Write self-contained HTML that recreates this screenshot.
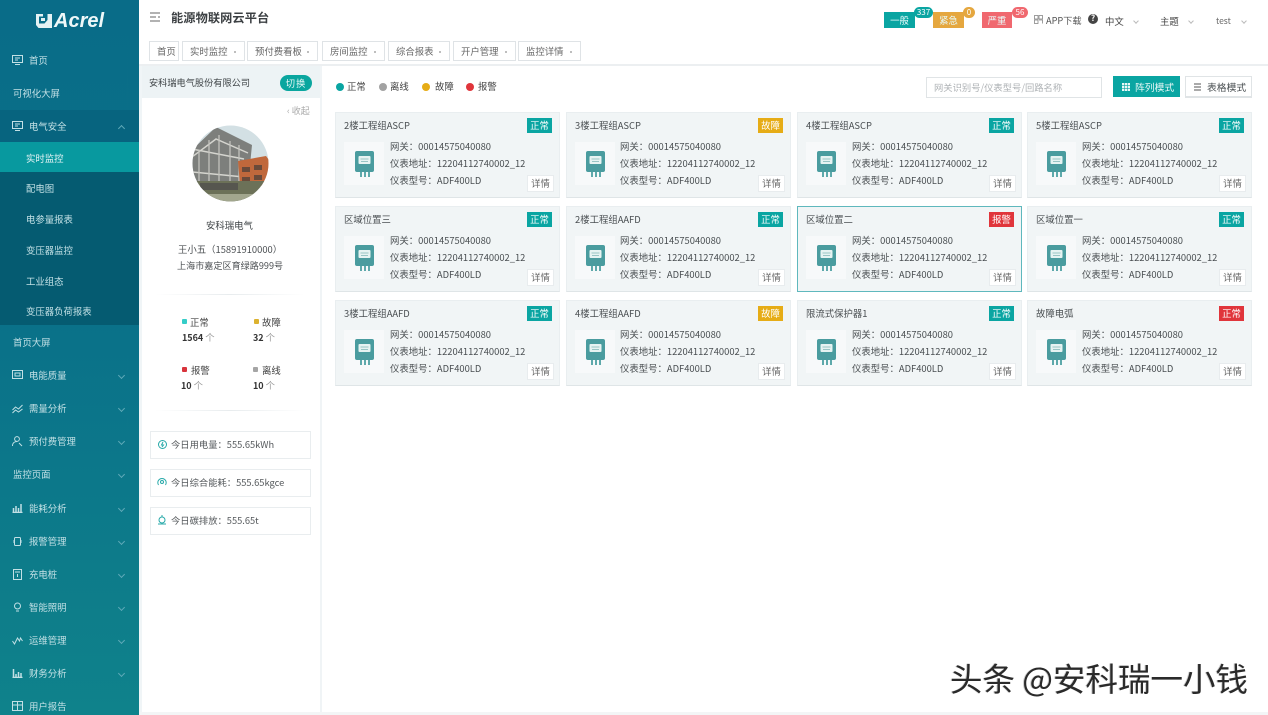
<!DOCTYPE html>
<html lang="zh-CN"><head><meta charset="utf-8"><title>能源物联网云平台</title>
<style>
html,body{margin:0;padding:0}
body{width:1268px;height:715px;overflow:hidden;background:#fff;font-family:"Noto Sans CJK SC","Liberation Sans",sans-serif;color:#444;position:relative}
#r{position:absolute;left:0;top:0;width:1268px;height:715px;overflow:hidden;filter:blur(.35px)}
.a{position:absolute}
.t{position:absolute;white-space:nowrap;line-height:16px;height:16px;font-size:9.4px}
#side{left:0;top:0;width:139px;height:715px;background:linear-gradient(180deg,#096c88 0,#0a7189 45%,#0f828b 100%);color:#cfe6ea}
#side .t{color:#c2e0e5;font-size:9.4px}
#side svg{position:absolute;fill:none;stroke:#c2e0e5;stroke-width:1}
.tab{position:absolute;top:41px;height:18px;border:1px solid #dfe3e6;background:#fff;font-size:9.4px;line-height:18px;color:#666;white-space:nowrap;box-sizing:content-box;padding-left:7px}
.tab i{position:absolute;right:8px;top:9px;width:2px;height:2px;background:#aaa;border-radius:50%}
.card{position:absolute;width:223px;height:84px;background:#f1f5f6;border:1px solid #e9eef0;border-bottom:1px solid #dfe5e7;box-sizing:content-box}
.card.sel{border:1px solid #5fb8bd}
.card .t{color:#4a4f52}
.tile{position:absolute;left:8px;top:29px;width:40px;height:43px;background:#f7f9fa}
.tile svg{position:absolute;left:10px;top:9px}
.bd{position:absolute;left:191px;top:5px;width:25px;height:15px;color:#fff;font-size:9.4px;line-height:15px;text-align:center}
.det{position:absolute;left:191px;top:62px;width:25px;height:15px;background:#fff;border:1px solid #e8ecee;color:#666;font-size:9.4px;line-height:15px;text-align:center}
.g{background:#0aa5a2}.y{background:#e6ac16}.rd{background:#e0353b}
.sum{position:absolute;left:150px;width:159px;height:26px;border:1px solid #e9edef;background:#fff}
.arr{position:absolute;width:4px;height:4px;border-right:1px solid #5fa9b8;border-bottom:1px solid #5fa9b8;transform:rotate(45deg)}
.top-b{position:absolute;top:12px;height:16px;width:31px;color:#e8fbfa;font-size:9.4px;line-height:16px;text-align:center}
.num{position:absolute;color:#fff;font-size:8px;line-height:11px;height:11px;border-radius:6px;text-align:center}
.chev{position:absolute;width:3px;height:3px;border-right:1px solid #bbb;border-bottom:1px solid #bbb;transform:rotate(45deg)}
.dot{position:absolute;width:8px;height:8px;border-radius:50%;top:83px}
.sd{position:absolute;width:5px;height:5px;border-radius:1px}
.n{font-weight:700;color:#333;font-size:9px}
.n span{font-weight:400;color:#999;font-size:9.4px;margin-left:2px}
</style></head><body><div id="r">

<!-- sidebar -->
<div id="side" class="a">
  <svg style="left:36px;top:14px;stroke:none" width="16" height="14" viewBox="0 0 16 14"><path style="fill:#e4f2f4" d="M0 0h7v2.500H3v7h5.500L11.500 6V0H16v14H2.500L0 11zM5 4h4v3H5z"/></svg>
  <div class="t" style="left:54px;top:10px;height:23px;line-height:23px;font:italic bold 20px 'Liberation Sans',sans-serif;color:#eef8f9">Acrel</div>
  <div class="a" style="left:0;top:142px;width:139px;height:30px;background:#08999f"></div>
  <div class="a" style="left:0;top:172px;width:139px;height:153px;background:#055b71"></div>
  <div class="a" style="left:0;top:110px;width:139px;height:32px;background:#07647f"></div>

  <svg style="left:12px;top:55px" width="11" height="10" viewBox="0 0 11 10"><rect x=".5" y=".5" width="10" height="7"/><path d="M3 9.500h5M3 3h5M3 5h3"/></svg>
  <div class="t" style="left:29px;top:52px">首页</div>
  <div class="t" style="left:13px;top:85px">可视化大屏</div>
  <svg style="left:12px;top:121px" width="11" height="10" viewBox="0 0 11 10"><rect x=".5" y=".5" width="10" height="7"/><path d="M3 9.500h5M3 3h5M3 5h3"/></svg>
  <div class="t" style="left:29px;top:118px">电气安全</div>
  <div class="arr" style="left:119px;top:126px;transform:rotate(225deg)"></div>
  <div class="t" style="left:26px;top:150px;color:#e4f4f5">实时监控</div>
  <div class="t" style="left:26px;top:180px">配电图</div>
  <div class="t" style="left:26px;top:211px">电参量报表</div>
  <div class="t" style="left:26px;top:242px">变压器监控</div>
  <div class="t" style="left:26px;top:273px">工业组态</div>
  <div class="t" style="left:26px;top:303px">变压器负荷报表</div>
  <div class="t" style="left:13px;top:334px">首页大屏</div>

  <svg style="left:12px;top:370px" width="11" height="10" viewBox="0 0 11 10"><rect x=".5" y=".5" width="10" height="8"/><path d="M3 3h5v3H3z"/></svg>
  <div class="t" style="left:29px;top:367px">电能质量</div><div class="arr" style="left:119px;top:373px"></div>
  <svg style="left:12px;top:404px" width="11" height="10" viewBox="0 0 11 10"><path d="M.5 6l3-3 3 2 4-4M.5 9l3-3 3 2 4-3"/></svg>
  <div class="t" style="left:29px;top:400px">需量分析</div><div class="arr" style="left:119px;top:406px"></div>
  <svg style="left:12px;top:436px" width="11" height="11" viewBox="0 0 11 11"><circle cx="5" cy="3" r="2.400"/><path d="M.5 10c0-3 2-4.500 4.500-4.500M7 7l3 3"/></svg>
  <div class="t" style="left:29px;top:433px">预付费管理</div><div class="arr" style="left:119px;top:439px"></div>
  <div class="t" style="left:13px;top:466px">监控页面</div><div class="arr" style="left:119px;top:472px"></div>
  <svg style="left:12px;top:503px" width="11" height="10" viewBox="0 0 11 10"><path d="M1.500 9.500V5M4 9.500V3M6.500 9.500V5M9 9.500V1M.5 9.500h10" stroke-width="1.500"/></svg>
  <div class="t" style="left:29px;top:500px">能耗分析</div><div class="arr" style="left:119px;top:506px"></div>
  <svg style="left:13px;top:536px" width="9" height="11" viewBox="0 0 9 11"><rect x="1.500" y="1.500" width="6" height="8" rx="1"/><path d="M0 4v3M9 4v3"/></svg>
  <div class="t" style="left:29px;top:533px">报警管理</div><div class="arr" style="left:119px;top:539px"></div>
  <svg style="left:13px;top:569px" width="9" height="11" viewBox="0 0 9 11"><rect x=".5" y=".5" width="8" height="10"/><path d="M2 3h5M4.500 5v3"/></svg>
  <div class="t" style="left:29px;top:566px">充电桩</div><div class="arr" style="left:119px;top:572px"></div>
  <svg style="left:13px;top:602px" width="9" height="11" viewBox="0 0 9 11"><circle cx="4.500" cy="4" r="3"/><path d="M3 9h3"/></svg>
  <div class="t" style="left:29px;top:599px">智能照明</div><div class="arr" style="left:119px;top:605px"></div>
  <svg style="left:12px;top:636px" width="11" height="9" viewBox="0 0 11 9"><path d="M.5 5l2 3 3-6 2 3 1-3 2 3"/></svg>
  <div class="t" style="left:29px;top:632px">运维管理</div><div class="arr" style="left:119px;top:638px"></div>
  <svg style="left:12px;top:668px" width="11" height="10" viewBox="0 0 11 10"><path d="M1.500 1v8.500M4 6v3.500M6.500 4v5.500M9 5v4.500M.5 9.500h10" stroke-width="1.500"/></svg>
  <div class="t" style="left:29px;top:665px">财务分析</div><div class="arr" style="left:119px;top:671px"></div>
  <svg style="left:12px;top:701px" width="11" height="10" viewBox="0 0 11 10"><rect x=".5" y=".5" width="10" height="9"/><path d="M.5 4h10M5.500.5v9"/></svg>
  <div class="t" style="left:29px;top:698px">用户报告</div>
</div>

<!-- header -->
<svg class="a" style="left:150px;top:12px" width="11" height="10" viewBox="0 0 11 10" fill="none" stroke="#666"><path d="M0 1h10M0 5h6M0 9h10M9 4v2"/></svg>
<div class="t" style="left:171px;top:9px;font-size:12.200px;font-weight:700;color:#3c4043;letter-spacing:.1px">能源物联网云平台</div>

<div class="top-b" style="left:884px;background:#0aa5a2">一般</div>
<div class="num" style="left:914px;top:7px;width:19px;background:#0aa5a2">337</div>
<div class="top-b" style="left:933px;background:#e5a73f">紧急</div>
<div class="num" style="left:963px;top:7px;width:12px;background:#e5a73f">0</div>
<div class="top-b" style="left:982px;width:30px;background:#f0686f">严重</div>
<div class="num" style="left:1012px;top:7px;width:16px;background:#f0686f">56</div>
<svg class="a" style="left:1034px;top:15px" width="9" height="9" viewBox="0 0 9 9" fill="none" stroke="#888" stroke-width=".8"><rect x=".5" y=".5" width="3.500" height="3.500"/><rect x="5" y=".5" width="3.500" height="3.500"/><rect x=".5" y="5" width="3.500" height="3.500"/><path d="M5 5h3.500v3.500"/></svg>
<div class="t" style="left:1046px;top:12px;color:#555;font-size:9.200px">APP下载</div>
<div class="a" style="left:1088px;top:14px;width:10px;height:10px;border-radius:50%;background:#444;color:#fff;font-size:8px;line-height:10px;text-align:center;font-weight:700">?</div>
<div class="t" style="left:1105px;top:13px;color:#444">中文</div><div class="chev" style="left:1134px;top:19px"></div>
<div class="t" style="left:1160px;top:13px;color:#444">主题</div><div class="chev" style="left:1189px;top:19px"></div>
<div class="t" style="left:1216px;top:13px;color:#666;font-size:8.500px">test</div><div class="chev" style="left:1242px;top:19px"></div>

<div class="tab" style="left:149px;width:21px">首页</div>
<div class="tab" style="left:182px;width:54px">实时监控<i></i></div>
<div class="tab" style="left:247px;width:62px">预付费看板<i></i></div>
<div class="tab" style="left:322px;width:54px">房间监控<i></i></div>
<div class="tab" style="left:388px;width:53px">综合报表<i></i></div>
<div class="tab" style="left:453px;width:54px">开户管理<i></i></div>
<div class="tab" style="left:518px;width:54px">监控详情<i></i></div>
<div class="a" style="left:139px;top:64px;width:1129px;height:2px;background:#eceff1"></div>
<div class="a" style="left:139px;top:66px;width:3px;height:649px;background:#f0f5f7"></div>
<div class="a" style="left:320px;top:66px;width:2px;height:649px;background:#f0f4f6"></div>
<div class="a" style="left:139px;top:712px;width:1129px;height:3px;background:#f3f5f6"></div>

<!-- left panel -->
<div class="a" style="left:142px;top:66px;width:178px;height:32px;background:#edf3f5"></div>
<div class="t" style="left:149px;top:74px;font-size:9.200px;color:#3e4346">安科瑞电气股份有限公司</div>
<div class="a" style="left:280px;top:75px;width:32px;height:16px;border-radius:8px;background:#0aa69f;color:#eaf9f8;font-size:9.400px;line-height:16px;text-align:center;letter-spacing:1px">切换</div>
<div class="t" style="left:287px;top:103px;font-size:9px;color:#aaa">‹ 收起</div>

<svg class="a" style="left:192px;top:125px" width="77" height="77" viewBox="0 0 77 77">
  <defs><clipPath id="c"><circle cx="38.500" cy="38.500" r="38"/></clipPath></defs>
  <g clip-path="url(#c)">
    <rect width="77" height="77" fill="#d3e0e4"/>
    <path d="M0 25L24 2 60 20 56 60 0 58z" fill="#7d7f7c"/>
    <path d="M0 32L24 14 56 28M0 47l52 5M0 24l52 10" stroke="#d5d5cf" stroke-width="1.500" fill="none"/>
    <path d="M7 25v32M17 15v44M27 10v48M38 16v44M47 20v42" stroke="#c3c3bd" stroke-width="1.300" fill="none"/>
    <path d="M46 36l28-5 3 4v26H48z" fill="#c0683c"/>
    <path d="M50 42h8v5h-8zM62 40h8v5h-8zM50 52h8v4h-8zM62 50h8v5h-8z" fill="#6a4a3a"/>
    <path d="M0 56h77v21H0z" fill="#6c7158"/>
    <path d="M8 58h38v7H8z" fill="#56564f"/>
    <path d="M14 69h50v8H14z" fill="#a2a68e"/>
  </g>
</svg>
<div class="t" style="left:206px;top:217px;color:#3e4346">安科瑞电气</div>
<div class="t" style="left:178px;top:241px;color:#4d5154;font-size:9.400px">王小五（15891910000）</div>
<div class="t" style="left:177px;top:257px;color:#4d5154;font-size:9.100px">上海市嘉定区育绿路999号</div>
<div class="a" style="left:155px;top:294px;width:150px;height:1px;background:linear-gradient(90deg,#fff,#e8ecee,#fff)"></div>
<div class="a" style="left:155px;top:410px;width:150px;height:1px;background:linear-gradient(90deg,#fff,#e8ecee,#fff)"></div>

<div class="sd" style="left:182px;top:319px;background:#35cdc8"></div><div class="t" style="left:190px;top:314px">正常</div>
<div class="t n" style="left:182px;top:329px">1564<span>个</span></div>
<div class="sd" style="left:254px;top:319px;background:#dcb22f"></div><div class="t" style="left:262px;top:314px">故障</div>
<div class="t n" style="left:253px;top:329px">32<span>个</span></div>
<div class="sd" style="left:182px;top:367px;background:#d8343c"></div><div class="t" style="left:191px;top:362px">报警</div>
<div class="t n" style="left:181px;top:377px">10<span>个</span></div>
<div class="sd" style="left:253px;top:367px;background:#a5a5a5"></div><div class="t" style="left:262px;top:362px">离线</div>
<div class="t n" style="left:253px;top:377px">10<span>个</span></div>

<div class="sum" style="top:431px"></div>
<svg class="a" style="left:158px;top:440px" width="9" height="9" viewBox="0 0 9 9" fill="none" stroke="#27a9a9"><circle cx="4.500" cy="4.500" r="4"/><path d="M5 2L3.500 5h2L4 7"/></svg>
<div class="t" style="left:171px;top:436px;color:#55595c;font-size:9.300px">今日用电量：555.65kWh</div>
<div class="sum" style="top:469px"></div>
<svg class="a" style="left:157px;top:477px" width="10" height="10" viewBox="0 0 10 10" fill="none" stroke="#27a9a9"><path d="M1.500 8A4.200 4.200 0 1 1 8.500 8"/><circle cx="5" cy="5" r="1.500"/></svg>
<div class="t" style="left:171px;top:474px;color:#55595c;font-size:9.300px">今日综合能耗：555.65kgce</div>
<div class="sum" style="top:507px"></div>
<svg class="a" style="left:157px;top:515px" width="10" height="10" viewBox="0 0 10 10" fill="none" stroke="#27a9a9"><circle cx="5" cy="5" r="3"/><path d="M5 0v2M1 9h8"/></svg>
<div class="t" style="left:171px;top:512px;color:#55595c;font-size:9.300px">今日碳排放：555.65t</div>

<!-- toolbar -->
<div class="dot g" style="left:336px"></div><div class="t" style="left:347px;top:78px">正常</div>
<div class="dot" style="left:379px;background:#a2a2a2"></div><div class="t" style="left:390px;top:78px">离线</div>
<div class="dot y" style="left:422px"></div><div class="t" style="left:435px;top:78px">故障</div>
<div class="dot rd" style="left:466px"></div><div class="t" style="left:478px;top:78px">报警</div>
<div class="a" style="left:926px;top:77px;width:174px;height:19px;border:1px solid #e0e4e6"></div>
<div class="t" style="left:934px;top:79px;color:#aeb2b5;font-size:9.300px">网关识别号/仪表型号/回路名称</div>
<div class="a" style="left:1113px;top:76px;width:67px;height:21px;background:#0aa5a2"></div>
<svg class="a" style="left:1122px;top:83px" width="8" height="8" viewBox="0 0 8 8"><path fill="#e8f8f7" d="M0 0h8v8H0z"/><path stroke="#0aa5a2" d="M0 2.700h8M0 5.300h8M2.700 0v8M5.300 0v8" stroke-width=".6"/></svg>
<div class="t" style="left:1135px;top:79px;color:#e8f8f7;font-size:9.800px">阵列模式</div>
<div class="a" style="left:1185px;top:76px;width:65px;height:19px;border:1px solid #e0e4e6;border-bottom-width:2px"></div>
<svg class="a" style="left:1194px;top:83px" width="8" height="8" viewBox="0 0 8 8" stroke="#555"><path d="M0 1h7M0 4h7M0 7h7"/></svg>
<div class="t" style="left:1207px;top:79px;color:#4a4f52;font-size:9.800px">表格模式</div>

<svg width="0" height="0" style="position:absolute"><defs>
<symbol id="m" viewBox="0 0 20 26"><rect x="1" y="0" width="19" height="21" rx="2" fill="#4a9c9f"/><rect x="4.500" y="5" width="12" height="8" rx="1" fill="#e6f3f2"/><path d="M6.500 8h8M7 10.500h7" stroke="#7fb5b5" stroke-width=".8"/><path d="M6 21h2v5H6zM10 21h2v5h-2zM14 21h2v5h-2z" fill="#5ea9ab"/></symbol>
</defs></svg>

<!-- row 1 -->
<div class="card" style="left:335px;top:112px"><div class="t" style="left:8px;top:4px">2楼工程组ASCP</div><div class="bd g">正常</div><div class="tile"><svg width="20" height="26"><use href="#m"/></svg></div><div class="t" style="left:54px;top:25px">网关：00014575040080</div><div class="t" style="left:54px;top:42px">仪表地址：12204112740002_12</div><div class="t" style="left:54px;top:59px">仪表型号：ADF400LD</div><div class="det">详情</div></div>
<div class="card" style="left:566px;top:112px"><div class="t" style="left:8px;top:4px">3楼工程组ASCP</div><div class="bd y">故障</div><div class="tile"><svg width="20" height="26"><use href="#m"/></svg></div><div class="t" style="left:53px;top:25px">网关：00014575040080</div><div class="t" style="left:53px;top:42px">仪表地址：12204112740002_12</div><div class="t" style="left:53px;top:59px">仪表型号：ADF400LD</div><div class="det">详情</div></div>
<div class="card" style="left:797px;top:112px"><div class="t" style="left:8px;top:4px">4楼工程组ASCP</div><div class="bd g">正常</div><div class="tile"><svg width="20" height="26"><use href="#m"/></svg></div><div class="t" style="left:54px;top:25px">网关：00014575040080</div><div class="t" style="left:54px;top:42px">仪表地址：12204112740002_12</div><div class="t" style="left:54px;top:59px">仪表型号：ADF400LD</div><div class="det">详情</div></div>
<div class="card" style="left:1027px;top:112px"><div class="t" style="left:8px;top:4px">5楼工程组ASCP</div><div class="bd g">正常</div><div class="tile"><svg width="20" height="26"><use href="#m"/></svg></div><div class="t" style="left:54px;top:25px">网关：00014575040080</div><div class="t" style="left:54px;top:42px">仪表地址：12204112740002_12</div><div class="t" style="left:54px;top:59px">仪表型号：ADF400LD</div><div class="det">详情</div></div>
<!-- row 2 -->
<div class="card" style="left:335px;top:206px"><div class="t" style="left:8px;top:4px">区域位置三</div><div class="bd g">正常</div><div class="tile"><svg width="20" height="26"><use href="#m"/></svg></div><div class="t" style="left:54px;top:25px">网关：00014575040080</div><div class="t" style="left:54px;top:42px">仪表地址：12204112740002_12</div><div class="t" style="left:54px;top:59px">仪表型号：ADF400LD</div><div class="det">详情</div></div>
<div class="card" style="left:566px;top:206px"><div class="t" style="left:8px;top:4px">2楼工程组AAFD</div><div class="bd g">正常</div><div class="tile"><svg width="20" height="26"><use href="#m"/></svg></div><div class="t" style="left:53px;top:25px">网关：00014575040080</div><div class="t" style="left:53px;top:42px">仪表地址：12204112740002_12</div><div class="t" style="left:53px;top:59px">仪表型号：ADF400LD</div><div class="det">详情</div></div>
<div class="card sel" style="left:797px;top:206px"><div class="t" style="left:8px;top:4px">区域位置二</div><div class="bd rd">报警</div><div class="tile"><svg width="20" height="26"><use href="#m"/></svg></div><div class="t" style="left:54px;top:25px">网关：00014575040080</div><div class="t" style="left:54px;top:42px">仪表地址：12204112740002_12</div><div class="t" style="left:54px;top:59px">仪表型号：ADF400LD</div><div class="det">详情</div></div>
<div class="card" style="left:1027px;top:206px"><div class="t" style="left:8px;top:4px">区域位置一</div><div class="bd g">正常</div><div class="tile"><svg width="20" height="26"><use href="#m"/></svg></div><div class="t" style="left:54px;top:25px">网关：00014575040080</div><div class="t" style="left:54px;top:42px">仪表地址：12204112740002_12</div><div class="t" style="left:54px;top:59px">仪表型号：ADF400LD</div><div class="det">详情</div></div>
<!-- row 3 -->
<div class="card" style="left:335px;top:300px"><div class="t" style="left:8px;top:4px">3楼工程组AAFD</div><div class="bd g">正常</div><div class="tile"><svg width="20" height="26"><use href="#m"/></svg></div><div class="t" style="left:54px;top:25px">网关：00014575040080</div><div class="t" style="left:54px;top:42px">仪表地址：12204112740002_12</div><div class="t" style="left:54px;top:59px">仪表型号：ADF400LD</div><div class="det">详情</div></div>
<div class="card" style="left:566px;top:300px"><div class="t" style="left:8px;top:4px">4楼工程组AAFD</div><div class="bd y">故障</div><div class="tile"><svg width="20" height="26"><use href="#m"/></svg></div><div class="t" style="left:53px;top:25px">网关：00014575040080</div><div class="t" style="left:53px;top:42px">仪表地址：12204112740002_12</div><div class="t" style="left:53px;top:59px">仪表型号：ADF400LD</div><div class="det">详情</div></div>
<div class="card" style="left:797px;top:300px"><div class="t" style="left:8px;top:4px">限流式保护器1</div><div class="bd g">正常</div><div class="tile"><svg width="20" height="26"><use href="#m"/></svg></div><div class="t" style="left:54px;top:25px">网关：00014575040080</div><div class="t" style="left:54px;top:42px">仪表地址：12204112740002_12</div><div class="t" style="left:54px;top:59px">仪表型号：ADF400LD</div><div class="det">详情</div></div>
<div class="card" style="left:1027px;top:300px"><div class="t" style="left:8px;top:4px">故障电弧</div><div class="bd rd">正常</div><div class="tile"><svg width="20" height="26"><use href="#m"/></svg></div><div class="t" style="left:54px;top:25px">网关：00014575040080</div><div class="t" style="left:54px;top:42px">仪表地址：12204112740002_12</div><div class="t" style="left:54px;top:59px">仪表型号：ADF400LD</div><div class="det">详情</div></div>

<!-- watermark -->
<div class="t" style="left:950px;top:657px;height:42px;line-height:42px;font-size:32.500px;color:#2a2a2a;font-weight:400;text-shadow:1px 1px 0 #fff,-1px 0 0 #ccc">头条 @安科瑞一小钱</div>
</div></body></html>
